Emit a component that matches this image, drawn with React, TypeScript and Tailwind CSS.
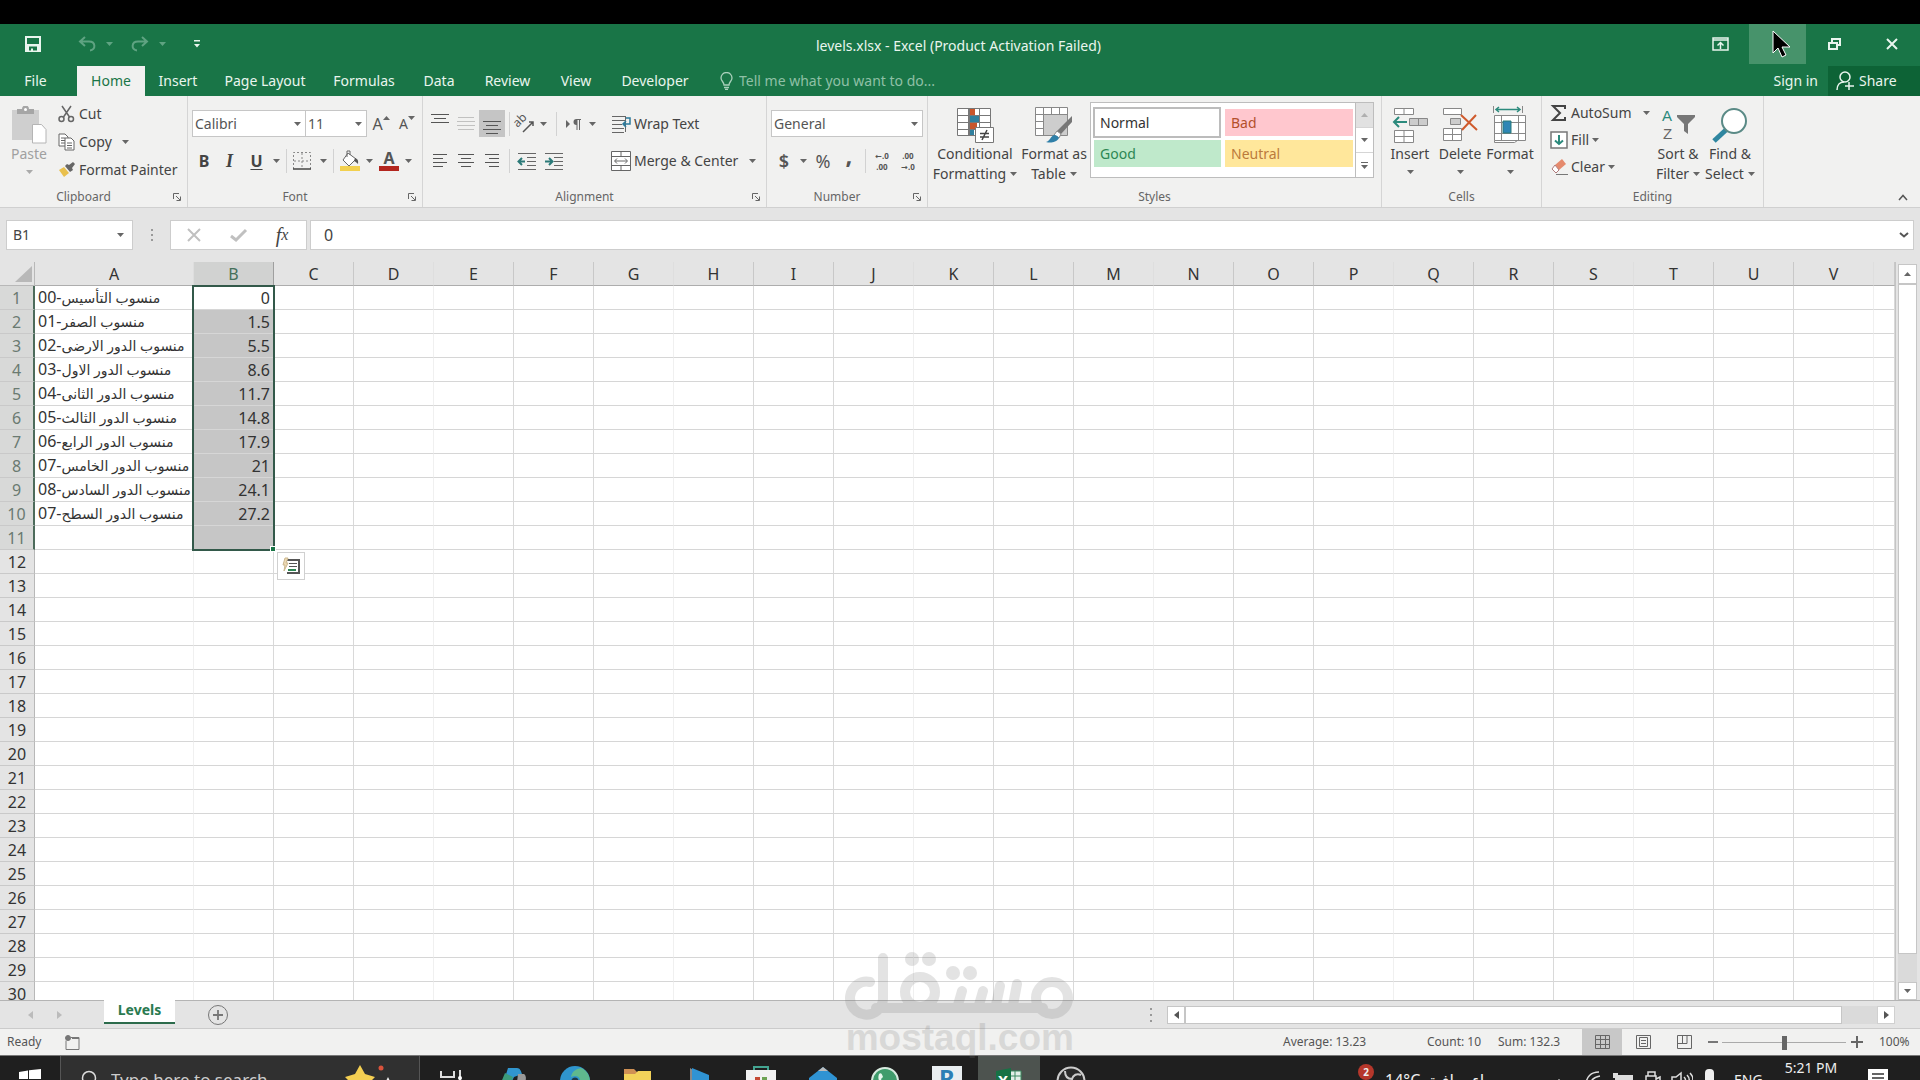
import type { ReactNode } from "react";

const ribbonTabs = [
  { name: "File", width: "w-[77px] pr-[6px]" },
  { name: "Home", width: "w-[68px]" },
  { name: "Insert", width: "w-[66px]" },
  { name: "Page Layout", width: "w-[108px]" },
  { name: "Formulas", width: "w-[90px]" },
  { name: "Data", width: "w-[60px]" },
  { name: "Review", width: "w-[77px]" },
  { name: "View", width: "w-[60px]" },
  { name: "Developer", width: "w-[98px]" },
];

const columns = "ABCDEFGHIJKLMNOPQRSTUVW".split("");

const levels = [
  ["منسوب التأسيس", "00", "0"],
  ["منسوب الصفر", "01", "1.5"],
  ["منسوب الدور الارضى", "02", "5.5"],
  ["منسوب الدور الاول", "03", "8.6"],
  ["منسوب الدور الثانى", "04", "11.7"],
  ["منسوب الدور الثالث", "05", "14.8"],
  ["منسوب الدور الرابع", "06", "17.9"],
  ["منسوب الدور الخامس", "07", "21"],
  ["منسوب الدور السادس", "08", "24.1"],
  ["منسوب الدور السطح", "07", "27.2"],
];

const rows = Array.from({ length: 30 }, (_, i) => i);

const Caret = ({ className = "" }: { className?: string }) => (
  <svg viewBox="0 0 7 4" className={`h-1 w-[7px] shrink-0 fill-[#666] ${className}`} aria-hidden="true">
    <path d="M0 0h7L3.5 4z" />
  </svg>
);

const Divider = () => <span className="h-6 w-px shrink-0 bg-[#d2d2d2]" />;

const ToolButton = ({
  label,
  className = "",
  children,
}: {
  label: string;
  className?: string;
  children: ReactNode;
}) => (
  <button
    type="button"
    aria-label={label}
    className={`flex h-[27px] shrink-0 items-center justify-center ${className}`}
  >
    {children}
  </button>
);

const RibbonGroup = ({
  title,
  className,
  launcher = false,
  children,
}: {
  title: string;
  className: string;
  launcher?: boolean;
  children: ReactNode;
}) => (
  <section className={`flex shrink-0 flex-col border-r border-[#d5d5d5] ${className}`} aria-label={title}>
    <div className="flex h-[91px] items-start">{children}</div>
    <div className="flex h-5 items-center">
      <span className="flex-1 text-center text-xs text-[#666]">{title}</span>
      {launcher && (
        <button type="button" aria-label={`${title} settings`} className="flex w-5 justify-center">
          <svg viewBox="0 0 8 8" className="size-2 fill-none stroke-[#666]">
            <path d="M.5 6V.5H6M3 3l4 4M7.5 3.5v4h-4" />
          </svg>
        </button>
      )}
    </div>
  </section>
);

const BigButton = ({
  icon,
  lines,
  className,
  caretBelow = false,
  muted = false,
}: {
  icon: ReactNode;
  lines: string[];
  className: string;
  caretBelow?: boolean;
  muted?: boolean;
}) => (
  <button
    type="button"
    className={`flex shrink-0 flex-col items-center pt-[10px] text-sm leading-5 ${muted ? "text-[#a0a0a0]" : "text-[#444]"} ${className}`}
  >
    <span className="flex h-[38px] items-center">{icon}</span>
    {lines.map((line, i) => (
      <span key={line} className="flex items-center gap-1 whitespace-nowrap">
        {line}
        {!caretBelow && i === lines.length - 1 && <Caret />}
      </span>
    ))}
    {caretBelow && <Caret className={muted ? "mt-[6px] opacity-50" : "mt-[6px]"} />}
  </button>
);

const Combo = ({ label, value, className }: { label: string; value: string; className: string }) => (
  <div className={`relative h-[27px] shrink-0 border border-[#c6c6c6] bg-white ${className}`}>
    <select
      aria-label={label}
      className="h-full w-full appearance-none bg-transparent pl-[2px] text-sm text-[#555] outline-none"
    >
      <option>{value}</option>
    </select>
    <Caret className="pointer-events-none absolute right-1 top-[11px]" />
  </div>
);

const Lines = ({ rows: widths, align = "items-start" }: { rows: string[]; align?: string }) => (
  <span className={`flex w-[18px] flex-col gap-[3px] ${align}`}>
    {widths.map((w, i) => (
      <span key={i} className={`h-px bg-[#555] ${w}`} />
    ))}
  </span>
);

const IndentIcon = ({ flip = false }: { flip?: boolean }) => (
  <svg viewBox="0 0 20 18" className="h-[18px] w-5 fill-none stroke-[#666]">
    <path d="M1 1.500h18M10 5.500h9M10 9.500h9M10 13.500h9M1 17.500h18" />
    {flip ? (
      <path className="stroke-[#2b7a78]" strokeWidth="2" d="M1 9.500h7M5 6l3.500 3.500L5 13" />
    ) : (
      <path className="stroke-[#2b7a78]" strokeWidth="2" d="M8 9.500H1.500M5 6 1.500 9.500 5 13" />
    )}
  </svg>
);

const TitleBar = () => (
  <header className="flex h-10 items-center bg-[#197547] text-[#e9f5ee]">
    <div className="flex w-[226px] items-center pl-6">
      <button type="button" aria-label="Save">
        <svg viewBox="0 0 18 18" className="size-[18px]">
          <path className="fill-[#e9f5ee]" fillRule="evenodd" d="M1 1h16v16H1zM3 3v6h12V3zM5 11.500v4h2v-2h2v2h4v-4z" />
        </svg>
      </button>
      <button type="button" aria-label="Undo" className="ml-9">
        <svg viewBox="0 0 18 16" className="h-4 w-[18px] fill-none stroke-[#5fa382] stroke-2">
          <path d="M7 1 2 5.500 7 10M2 5.500h9c7 0 7 8.500 1 9" />
        </svg>
      </button>
      <Caret className="ml-[10px] fill-[#5fa382]!" />
      <button type="button" aria-label="Redo" className="ml-[18px]">
        <svg viewBox="0 0 18 16" className="h-4 w-[18px] fill-none stroke-[#5fa382] stroke-2">
          <path d="m11 1 5 4.500-5 4.500M16 5.500H7c-7 0-7 8.500-1 9" />
        </svg>
      </button>
      <Caret className="ml-[10px] fill-[#5fa382]!" />
      <button type="button" aria-label="Customize Quick Access Toolbar" className="ml-7">
        <svg viewBox="0 0 6 8" className="h-2 w-[6px] fill-[#e9f5ee]">
          <path d="M0 0h6v1.500H0zM0 4h6L3 7.500z" />
        </svg>
      </button>
    </div>
    <h1 className="flex-1 pt-[3px] text-center text-sm">levels.xlsx - Excel (Product Activation Failed)</h1>
    <div className="flex h-full w-[229px] items-center">
      <button type="button" aria-label="Ribbon Display Options" className="flex h-full w-[58px] items-center justify-center">
        <svg viewBox="0 0 17 14" className="h-[14px] w-[17px] fill-none stroke-[#e9f5ee]">
          <path strokeWidth="1.500" d="M1 1h15v12H1z" />
          <path strokeWidth="1.500" d="M1 3h15M8.500 12V5.500M5.500 8.500l3-3 3 3" />
        </svg>
      </button>
      <button type="button" aria-label="Minimize" className="h-full w-[57px] bg-[#47936b]" />
      <button type="button" aria-label="Restore" className="flex h-full w-[57px] items-center justify-center">
        <svg viewBox="0 0 13 12" className="h-3 w-[13px] fill-none stroke-[#e9f5ee] stroke-2">
          <path d="M1 5h8v6H1zM4 4V1h8v6H9" />
        </svg>
      </button>
      <button type="button" aria-label="Close" className="flex h-full w-[57px] items-center justify-center">
        <svg viewBox="0 0 12 12" className="size-3 stroke-[#e9f5ee] stroke-2">
          <path d="m1 1 10 10M11 1 1 11" />
        </svg>
      </button>
    </div>
  </header>
);

const TabBar = () => (
  <nav className="flex h-8 items-end bg-[#197547] text-sm text-[#e9f5ee]">
    {ribbonTabs.map((tab) => (
      <button
        key={tab.name}
        type="button"
        className={`h-[30px] shrink-0 whitespace-nowrap ${tab.width} ${tab.name === "Home" ? "bg-[#f1f1f0] text-[#197547]" : ""}`}
      >
        {tab.name}
      </button>
    ))}
    <label className="ml-4 flex h-[30px] flex-1 items-center gap-[6px] text-[#8fc0a6]">
      <svg viewBox="0 0 13 18" className="h-[18px] w-[13px] fill-none stroke-[#a9d0bb]">
        <path strokeWidth="1.300" d="M4 13c0-3-3-4-3-7a5.500 5.500 0 0 1 11 0c0 3-3 4-3 7zM4 15.500h5M5 17.500h3" />
      </svg>
      <input
        aria-label="Tell me what you want to do"
        placeholder="Tell me what you want to do..."
        className="w-60 bg-transparent outline-none placeholder:text-[#8fc0a6]"
      />
    </label>
    <button type="button" className="h-[30px] px-[10px]">
      Sign in
    </button>
    <button type="button" className="flex h-[30px] w-[92px] items-center gap-1 bg-[#0d6336] pl-2">
      <svg viewBox="0 0 19 20" className="h-5 w-[19px] fill-none stroke-[#e9f5ee]">
        <circle cx="9" cy="6" r="5" strokeWidth="1.500" />
        <path strokeWidth="1.500" d="M1 19c0-5 3-8 7-8M13 11v8M9 15h9" />
      </svg>
      Share
    </button>
  </nav>
);

const Clipboard = () => (
  <RibbonGroup title="Clipboard" className="w-[188px]" launcher>
    <BigButton
      className="ml-1 w-[50px]"
      lines={["Paste"]}
      caretBelow
      muted
      icon={
        <svg viewBox="0 0 36 38" className="h-[38px] w-9">
          <path className="fill-[#cfcfcf]" d="M1 4h27v30H1z" />
          <path className="fill-[#a6a6a6]" d="M6 3h5a3.500 3.500 0 0 1 7 0h5v5H6z" />
          <circle cx="14.500" cy="3.500" r="1.500" className="fill-white" />
          <path className="fill-white stroke-[#b5b5b5]" d="M21.500 18.500h9l4.500 5v13.500H21.500z" />
        </svg>
      }
    />
    <div className="flex flex-col pl-1 pt-1 text-sm text-[#444]">
      <button type="button" className="flex h-7 items-center gap-1">
        <svg viewBox="0 0 17 18" className="h-[18px] w-[17px] fill-none stroke-[#666] stroke-[1.500]">
          <path d="m4 1 7.500 11M13 1 5.500 12" />
          <circle cx="3.500" cy="14" r="2.500" />
          <circle cx="13" cy="14" r="2.500" />
        </svg>
        Cut
      </button>
      <button type="button" className="flex h-7 items-center gap-1">
        <svg viewBox="0 0 17 18" className="h-[18px] w-[17px] fill-white stroke-[#666]">
          <path d="M1 1h6l3 3v9H1zM3 5h4M3 7.500h4M3 10h4" />
          <path d="M7 5h6l3 3v9H7zM9 10h5M9 12.500h5M9 15h5" />
        </svg>
        Copy <Caret className="ml-[6px]" />
      </button>
      <button type="button" className="flex h-7 items-center gap-1 whitespace-nowrap">
        <svg viewBox="0 0 17 16" className="h-4 w-[17px]">
          <path className="fill-[#666]" d="m11 3 4-3 2 2-3 4 1 2-3 2-5-6 2-2z" />
          <path className="fill-[#e9c04d]" d="m6 5 5 6-5 4-5-7z" />
        </svg>
        Format Painter
      </button>
    </div>
  </RibbonGroup>
);

const FontGroup = () => (
  <RibbonGroup title="Font" className="w-[235px]" launcher>
    <div className="flex flex-col gap-[10px] pl-1 pt-[14px]">
      <div className="flex">
        <Combo label="Font" value="Calibri" className="w-[114px]" />
        <Combo label="Font size" value="11" className="w-[61px] border-l-0" />
        <ToolButton label="Increase font size" className="w-7 text-base text-[#555]">
          A<Caret className="mb-3 rotate-180" />
        </ToolButton>
        <ToolButton label="Decrease font size" className="w-6 text-sm text-[#555]">
          A<Caret className="mb-3" />
        </ToolButton>
      </div>
      <div className="flex items-center">
        <ToolButton label="Bold" className="w-6 text-base font-bold text-[#444]">B</ToolButton>
        <ToolButton label="Italic" className="w-[27px] font-[Liberation_Serif] text-lg font-bold italic text-[#444]">I</ToolButton>
        <ToolButton label="Underline" className="w-[27px] text-base font-bold text-[#444] underline underline-offset-2">U</ToolButton>
        <ToolButton label="Underline style" className="w-3"><Caret /></ToolButton>
        <span className="w-1" />
        <Divider />
        <ToolButton label="Borders" className="w-[30px]">
          <svg viewBox="0 0 18 18" className="size-[18px] fill-none stroke-[#888]">
            <path strokeDasharray="2 2" d="M.5 17V.5h17V17M9 1v16M1 9h16" />
            <path strokeWidth="1.500" className="stroke-[#444]" d="M0 17h18" />
          </svg>
        </ToolButton>
        <ToolButton label="Border style" className="w-3"><Caret /></ToolButton>
        <span className="w-1" />
        <Divider />
        <ToolButton label="Fill color" className="w-8">
          <svg viewBox="0 0 22 22" className="size-[22px]">
            <path className="fill-white stroke-[#666]" d="m9 3 8 6-7 7-6-6zM8 7V1h3v4" />
            <path className="fill-[#555]" d="M16 8c3 1 3.500 3 3 6-1-1-2-2-4-3z" />
            <path className="fill-[#f2d04f]" d="M1 16h20v5H1z" />
          </svg>
        </ToolButton>
        <Caret />
        <ToolButton label="Font color" className="w-8">
          <span className="flex w-5 flex-col items-center border-b-[5px] border-[#b3261e] text-base font-bold leading-4 text-[#555]">A</span>
        </ToolButton>
        <Caret />
      </div>
    </div>
  </RibbonGroup>
);

const Alignment = () => (
  <RibbonGroup title="Alignment" className="w-[344px]" launcher>
    <div className="flex w-[186px] flex-col gap-[10px] pl-1 pt-[14px]">
      <div className="flex items-center">
        <ToolButton label="Top align" className="w-[26px] pb-[10px]"><Lines rows={["w-[18px]", "w-3", "w-[18px]"]} align="items-center" /></ToolButton>
        <ToolButton label="Middle align" className="w-[26px] opacity-30"><Lines rows={["w-4", "w-[18px]", "w-[18px]", "w-4"]} align="items-center" /></ToolButton>
        <ToolButton label="Bottom align" className="w-[26px] bg-[#c5c5c5] pt-2"><Lines rows={["w-[18px]", "w-3", "w-[18px]", "w-3"]} align="items-center" /></ToolButton>
        <span className="w-1" />
        <Divider />
        <ToolButton label="Orientation" className="w-[30px]">
          <svg viewBox="0 0 20 18" className="h-[18px] w-5 overflow-visible">
            <text x="0" y="9" transform="rotate(-45 6 8)" className="fill-[#555] text-[12px]">ab</text>
            <path className="fill-none stroke-[#555] stroke-[1.500]" d="M8 17 18 7M14 7h4v4" />
          </svg>
        </ToolButton>
        <Caret />
        <span className="w-[9px]" />
        <Divider />
        <ToolButton label="Text direction" className="w-8">
          <svg viewBox="0 0 16 12" className="h-3 w-4 fill-[#666]">
            <path d="M1 2v8l4-4zM11 1h5v1h-1v10h-1V2h-1.500v10h-1V7a3 3 0 0 1 0-6z" />
          </svg>
        </ToolButton>
        <Caret />
      </div>
      <div className="flex items-center">
        <ToolButton label="Align left" className="w-[26px] pl-1"><Lines rows={["w-[14px]", "w-[10px]", "w-[14px]", "w-[10px]"]} /></ToolButton>
        <ToolButton label="Center" className="w-[26px]"><Lines rows={["w-4", "w-[10px]", "w-4", "w-[10px]"]} align="items-center" /></ToolButton>
        <ToolButton label="Align right" className="w-[26px] pr-1"><Lines rows={["w-[14px]", "w-[10px]", "w-[14px]", "w-[10px]"]} align="items-end" /></ToolButton>
        <span className="w-1" />
        <Divider />
        <ToolButton label="Decrease indent" className="w-[34px]"><IndentIcon /></ToolButton>
        <ToolButton label="Increase indent" className="w-5"><IndentIcon flip /></ToolButton>
      </div>
    </div>
    <div className="ml-[2px] flex flex-col gap-[10px] pt-[14px] text-sm text-[#444]">
      <button type="button" className="flex h-[27px] items-center gap-[3px]">
        <svg viewBox="0 0 20 18" className="h-[18px] w-5 fill-none stroke-[#666]">
          <path d="M1 1.500h13M1 5.500h13M1 9.500h10M1 13.500h12M1 17.500h12M14.500 1v16" />
          <path className="stroke-[#2b7a9b] stroke-[1.500]" d="M15 3h4v6h-6M15 6l-3 3 3 3" />
        </svg>
        Wrap Text
      </button>
      <button type="button" className="flex h-[27px] items-center gap-[3px] whitespace-nowrap">
        <svg viewBox="0 0 20 20" className="size-5 fill-white stroke-[#666]">
          <path d="M.5.5h19v19H.5zM.5 5.500h19M.5 14.500h19M10 .5v5M10 14.500v5M4 10h12M6 7.500 3.500 10 6 12.500M14 7.500l2.500 2.500-2.500 2.500" />
        </svg>
        Merge &amp; Center <Caret className="ml-2" />
      </button>
    </div>
  </RibbonGroup>
);

const NumberGroup = () => (
  <RibbonGroup title="Number" className="w-[161px]" launcher>
    <div className="flex flex-col gap-[10px] pl-1 pt-[14px]">
      <Combo label="Number format" value="General" className="w-[152px]" />
      <div className="flex items-center text-[#555]">
        <ToolButton label="Accounting format" className="w-[26px] text-lg font-semibold">$</ToolButton>
        <ToolButton label="Accounting symbols" className="w-3"><Caret /></ToolButton>
        <ToolButton label="Percent style" className="w-7 text-lg">%</ToolButton>
        <ToolButton label="Comma style" className="w-6 pb-3 text-2xl font-bold">,</ToolButton>
        <span className="w-1" />
        <Divider />
        <ToolButton label="Increase decimal" className="w-8 flex-col text-[8px] font-bold leading-[11px]">
          <span className="whitespace-nowrap">←.0</span>
          <span>.00</span>
        </ToolButton>
        <ToolButton label="Decrease decimal" className="w-5 flex-col text-[8px] font-bold leading-[11px]">
          <span>.00</span>
          <span className="whitespace-nowrap">→.0</span>
        </ToolButton>
      </div>
    </div>
  </RibbonGroup>
);

const Styles = () => (
  <RibbonGroup title="Styles" className="w-[454px]">
    <BigButton
      className="w-[94px]"
      lines={["Conditional", "Formatting"]}
      icon={
        <svg viewBox="0 0 37 36" className="h-9 w-[37px]">
          <path className="fill-white stroke-[#777]" d="M.5 1.500h33v27H.5zM.5 8.500h33M.5 15.500h33M.5 22.500h33M11.500 1v27M22.500 1v27" />
          <path className="fill-[#777]" d="M11 1h6v27h-6z" />
          <path className="fill-[#c8552b]" d="M13 2h5v6h-5zM13 16h7v6h-7z" />
          <path className="fill-[#2f7f9e]" d="M13 9h9v6h-9zM13 23h4v5h-4z" />
          <path className="fill-white stroke-[#777]" d="M18.500 20.500h18v15h-18z" />
          <path className="fill-none stroke-[#444] stroke-[1.500]" d="M23 26.500h9M23 30h9M30 23l-5 10" />
        </svg>
      }
    />
    <BigButton
      className="w-16"
      lines={["Format as", "Table"]}
      icon={
        <svg viewBox="0 0 38 36" className="h-9 w-[38px]">
          <path className="fill-white" d="M.5.5h32v28H.5z" />
          <path className="fill-[#cdcdcd]" d="M8 8h24v20H8z" />
          <path className="fill-none stroke-[#888]" d="M.5.5h32v28H.5zM.5 7.500h32M.5 14.500h8M.5 21.500h8M8.500.5v28M16.500.5v7M24.500.5v7" />
          <path className="fill-[#777]" d="M37 9v6L26 27l-4-3z" />
          <path className="fill-white stroke-[#888]" d="m22 24 4 3-2 4-5-3z" />
          <path className="fill-[#2f7fa8]" d="M19 28c2 0 4 1 5 3-3 5-9 5-13 4 4-1 4-5 8-7z" />
        </svg>
      }
    />
    <div className="ml-1 mt-[6px] flex h-[76px] w-[284px] border border-[#bdbdbd] bg-white text-sm">
      <div className="grid flex-1 grid-cols-2 content-start gap-x-1 gap-y-[2px] p-[2px] pt-1">
        <button type="button" className="h-[31px] border-2 border-[#bcbcbc] pl-[5px] text-left text-[#333]">Normal</button>
        <button type="button" className="my-[2px] h-[27px] bg-[#ffc7ce] pl-[6px] text-left text-[#b3502b]">Bad</button>
        <button type="button" className="ml-px h-[27px] bg-[#bfe9cb] pl-[6px] text-left text-[#2d8754]">Good</button>
        <button type="button" className="h-[27px] bg-[#ffe79b] pl-[6px] text-left text-[#bb7a3c]">Neutral</button>
      </div>
      <div className="flex w-[18px] flex-col divide-y divide-[#d5d5d5] border-l border-[#bdbdbd]">
        <button type="button" aria-label="Previous styles" className="flex flex-1 items-center justify-center bg-[#e1e1e1]"><Caret className="rotate-180 opacity-40" /></button>
        <button type="button" aria-label="Next styles" className="flex flex-1 items-center justify-center"><Caret /></button>
        <button type="button" aria-label="More styles" className="flex flex-1 flex-col items-center justify-center gap-[2px]">
          <span className="h-px w-[7px] bg-[#666]" />
          <Caret />
        </button>
      </div>
    </div>
  </RibbonGroup>
);

const Cells = () => (
  <RibbonGroup title="Cells" className="w-40">
    <BigButton
      className="ml-1 w-12"
      lines={["Insert"]}
      caretBelow
      icon={
        <svg viewBox="0 0 36 36" className="size-9 fill-white stroke-[#888]">
          <path d="M2.500 1.500h19v6h-19zM12 1.500v6M2.500 23.500h19v12h-19zM12 23.500v12M2.500 29.500h19" />
          <path className="fill-[#ccc]" d="M17.500 11.500h18v7h-18zM26.500 11.500v7" />
          <path className="fill-none stroke-[#2b8a7c] stroke-2" d="M15 15H2M7 10l-5 5 5 5" />
        </svg>
      }
    />
    <BigButton
      className="w-[52px]"
      lines={["Delete"]}
      caretBelow
      icon={
        <svg viewBox="0 0 36 36" className="size-9 fill-white stroke-[#888]">
          <path d="M1.500 1.500h18v6h-18zM1.500 21.500h18v12h-18zM10.500 21.500v12M1.500 27.500h18" />
          <path className="fill-[#ccc]" d="M8.500 11.500h10v6h-10z" />
          <path className="fill-none stroke-[#cf5a2c] stroke-2" d="m19 8 16 15M34 8 20 23" />
        </svg>
      }
    />
    <BigButton
      className="w-12"
      lines={["Format"]}
      caretBelow
      icon={
        <svg viewBox="0 0 36 38" className="h-[38px] w-9 fill-white stroke-[#888]">
          <path d="M2.500 9.500h31v25h-31zM9.500 9.500v25M26.500 9.500v25M2.500 16.500h31M2.500 27.500h31M2.500 34.500v2h20l3-2" />
          <path className="fill-[#2f86b5] stroke-[#2b7a78]" d="M11 15h8v12h-8z" />
          <path className="fill-none stroke-[#2b8a7c] stroke-[1.500]" d="M4 3.500h24M7 1 4 3.500 7 6M25 1l3 2.500L25 6" />
          <path d="M1.500 0v7M30.500 0v7" />
        </svg>
      }
    />
  </RibbonGroup>
);

const Editing = () => (
  <RibbonGroup title="Editing" className="w-[222px]">
    <div className="ml-2 flex w-[102px] flex-col pt-[3px] text-sm text-[#444]">
      <button type="button" className="flex h-[27px] items-center gap-[3px]">
        <svg viewBox="0 0 18 18" className="size-[18px] fill-none stroke-[#444] stroke-2">
          <path d="M15 5V2H3l7 7-7 7h12v-3" />
        </svg>
        AutoSum <Caret className="ml-2" />
      </button>
      <button type="button" className="flex h-[27px] items-center gap-[3px]">
        <svg viewBox="0 0 18 18" className="size-[18px] fill-white stroke-[#777]">
          <path strokeWidth="1.500" d="M1 1h16v16H1z" />
          <path className="fill-none stroke-[#2b8a7c] stroke-2" d="M9 4v9M5 9.500 9 13l4-3.500" />
        </svg>
        Fill <Caret />
      </button>
      <button type="button" className="flex h-[27px] items-center gap-[3px]">
        <svg viewBox="0 0 18 18" className="size-[18px]">
          <path className="fill-[#e58a6d]" d="m5 7 7-6 4 5-7 6z" />
          <path className="fill-white stroke-[#b07a7a]" d="m5 7 4 5-3 3-4-4z" />
          <path className="stroke-[#777]" d="M6 16.500h12" />
        </svg>
        Clear <Caret />
      </button>
    </div>
    <BigButton
      className="w-[52px]"
      lines={["Sort &", "Filter"]}
      icon={
        <svg viewBox="0 0 35 36" className="h-9 w-[35px] overflow-visible font-[Liberation_Sans]">
          <text x="1" y="14" className="fill-[#2b8a7c] text-[15px]">A</text>
          <text x="2" y="32" className="fill-[#666] text-[15px]">Z</text>
          <path className="fill-[#777]" d="M16 8h18v2l-7 7v10l-4-3v-7l-7-7z" />
        </svg>
      }
    />
    <BigButton
      className="w-[52px]"
      lines={["Find &", "Select"]}
      icon={
        <svg viewBox="0 0 36 36" className="size-9">
          <path className="stroke-[#2f86a0] stroke-[5]" d="M2 34 15 22" />
          <circle cx="22" cy="14" r="12" className="fill-white stroke-[#5a8a86] stroke-2" />
        </svg>
      }
    />
  </RibbonGroup>
);

const FormulaBar = () => (
  <div className="flex h-[55px] items-start border-t border-[#d0d0d0] bg-[#e4e4e4] px-[6px] pt-3 text-[#444]">
    <div className="flex h-[30px] w-[127px] shrink-0 items-center border border-[#cdcdcd] bg-white pr-2">
      <input aria-label="Name Box" defaultValue="B1" className="min-w-0 flex-1 bg-transparent pl-[6px] text-sm outline-none" />
      <Caret />
    </div>
    <div className="flex h-[30px] w-[37px] shrink-0 flex-col items-center justify-center gap-[3px]">
      <span className="size-[2px] bg-[#999]" />
      <span className="size-[2px] bg-[#999]" />
      <span className="size-[2px] bg-[#999]" />
    </div>
    <div className="flex h-[30px] w-[137px] shrink-0 items-center border border-[#cdcdcd] bg-white">
      <ToolButton label="Cancel" className="w-[45px]">
        <svg viewBox="0 0 14 14" className="size-[14px] stroke-[#c0c0c0] stroke-2"><path d="m1 1 12 12M13 1 1 13" /></svg>
      </ToolButton>
      <ToolButton label="Enter" className="w-[45px]">
        <svg viewBox="0 0 18 14" className="h-[14px] w-[18px] fill-none stroke-[#c0c0c0] stroke-[3]"><path d="m1 8 5 4L16 2" /></svg>
      </ToolButton>
      <ToolButton label="Insert Function" className="w-[42px] font-[Liberation_Serif] text-xl italic">
        f<span className="text-base">x</span>
      </ToolButton>
    </div>
    <div className="ml-[3px] flex h-[30px] flex-1 items-center border border-[#cdcdcd] bg-white pr-1">
      <input aria-label="Formula" defaultValue="0" className="min-w-0 flex-1 bg-transparent pl-[13px] text-base outline-none" />
      <button type="button" aria-label="Expand formula bar">
        <svg viewBox="0 0 10 6" className="h-[6px] w-[10px] fill-none stroke-[#555] stroke-2"><path d="m1 1 4 3.500L9 1" /></svg>
      </button>
    </div>
  </div>
);

const Sheet = () => (
  <div className="flex min-h-0 flex-1 bg-[#e4e4e4]">
    <div className="relative min-w-0 flex-1 overflow-hidden border-r border-[#c4c4c4]">
      <table className="w-full table-fixed border-separate border-spacing-0 text-base leading-5 text-[#333]">
        <thead>
          <tr className="h-6">
            <th className="w-[35px] border-b border-r border-[#b8b8b8] p-0">
              <svg viewBox="0 0 17 16" className="ml-auto mr-[2px] h-4 w-[17px] fill-[#b8b8b8]"><path d="M17 0v16H0z" /></svg>
            </th>
            {columns.map((name, i) => (
              <th
                key={name}
                scope="col"
                className={`h-6 border-b border-r p-0 text-center font-normal ${
                  name === "A" ? "w-[159px]" : name === "W" ? "" : "w-20"
                } ${name === "B" ? "border-[#9f9f9f] bg-[#d1d2d1] text-[#45705a]" : i % 3 === 0 ? "border-r-[#dedede] border-b-[#adadad]" : "border-r-[#c8c8c8] border-b-[#adadad]"}`}
              >
                {name === "W" ? "" : name}
              </th>
            ))}
          </tr>
        </thead>
        <tbody>
          {rows.map((r) => (
            <tr key={r} className="h-6">
              <th
                scope="row"
                className={`h-6 border-b border-r border-b-[#c9c9c9] p-0 text-center font-normal ${
                  r < 11 ? "border-r-2 border-r-[#4d6b5b] bg-[#d8d9d8] text-[#6a7a71]" : "border-r-[#b8b8b8]"
                }`}
              >
                {r + 1}
              </th>
              {columns.map((name, i) => {
                const item = levels[r];
                const selected = name === "B" && r > 0 && r < 11;
                return (
                  <td
                    key={name}
                    className={`h-6 overflow-hidden whitespace-nowrap border-b border-r border-b-[#d6d6d6] p-0 ${
                      i % 3 === 0 ? "border-r-[#f0f0f0]" : "border-r-[#d9d9d9]"
                    } ${selected ? "bg-[#c6c6c6]" : "bg-white"} ${name === "B" ? "pr-[3px] text-right" : "pl-[3px]"}`}
                  >
                    {name === "A" && item && (
                      <>
                        <span>{item[1]}-</span>
                        <span dir="rtl" className="inline-block text-sm leading-5">{item[0]}</span>
                      </>
                    )}
                    {name === "B" && item && item[2]}
                  </td>
                );
              })}
            </tr>
          ))}
        </tbody>
      </table>
      <div className="pointer-events-none absolute left-[192px] top-[23px] h-[266px] w-[83px] border-2 border-[#33594a]">
        <span className="absolute -bottom-[3px] -right-[3px] size-[6px] border border-white bg-[#197547]" />
      </div>
      <button
        type="button"
        aria-label="Quick Analysis"
        className="absolute left-[277px] top-[290px] flex size-7 items-center justify-center border border-[#d0d0d0] bg-white"
      >
        <svg viewBox="0 0 18 18" className="size-[18px] fill-none stroke-[#555]">
          <path strokeWidth="2" d="M5 3h12v13H5" />
          <path d="M7 6.500h8M7 9.500h8" />
          <path className="stroke-[#2d8754] stroke-2" d="M6 13h8" />
          <path className="fill-[#ecd9b4] stroke-[#cbb78e]" d="M3 1 1 8h2l-1 6 4-8H4l2-5z" />
        </svg>
      </button>
    </div>
    <div className="flex w-6 shrink-0 flex-col items-center pr-px pt-[2px]">
      <button type="button" aria-label="Scroll up" className="flex h-5 w-[19px] shrink-0 items-center justify-center border border-[#c6c6c6] bg-white">
        <Caret className="rotate-180" />
      </button>
      <div className="flex w-[19px] flex-1 flex-col bg-[#dadada]">
        <div className="h-[96%] border border-[#c6c6c6] bg-white" />
      </div>
      <button type="button" aria-label="Scroll down" className="flex h-[18px] w-[19px] shrink-0 items-center justify-center border border-[#c6c6c6] bg-white">
        <Caret />
      </button>
    </div>
  </div>
);

const SheetTabs = () => (
  <div className="flex h-[29px] shrink-0 border-b border-t border-[#b4b4b4] border-b-[#cbcbcb] bg-[#e4e4e4]">
    <div className="flex w-[104px] items-center gap-6 pl-7">
      <button type="button" aria-label="Previous sheet">
        <svg viewBox="0 0 5 8" className="h-2 w-[5px] fill-[#bbb]"><path d="M5 0v8L0 4z" /></svg>
      </button>
      <button type="button" aria-label="Next sheet">
        <svg viewBox="0 0 5 8" className="h-2 w-[5px] fill-[#bbb]"><path d="M0 0v8l5-4z" /></svg>
      </button>
    </div>
    <button type="button" className="-mt-px h-6 w-[71px] border-b-2 border-[#2c6b4b] bg-white pb-[2px] text-sm font-bold text-[#2a7a50]">
      Levels
    </button>
    <button type="button" aria-label="New sheet" className="ml-8 self-center">
      <svg viewBox="0 0 22 22" className="size-[22px] fill-none stroke-[#777]">
        <circle cx="11" cy="11" r="9.500" />
        <path strokeWidth="1.800" d="M11 6v10M6 11h10" />
      </svg>
    </button>
    <div className="ml-auto flex w-[770px] items-center pr-[25px]">
      <div className="flex w-[17px] flex-col gap-1">
        <span className="size-[2px] bg-[#999]" />
        <span className="size-[2px] bg-[#999]" />
        <span className="size-[2px] bg-[#999]" />
      </div>
      <button type="button" aria-label="Scroll left" className="flex h-[18px] w-[18px] items-center justify-center border border-[#c6c6c6] bg-white">
        <svg viewBox="0 0 5 8" className="h-2 w-[5px] fill-[#555]"><path d="M5 0v8L0 4z" /></svg>
      </button>
      <div className="flex h-[18px] flex-1 bg-[#dadada]">
        <div className="w-[95%] border border-[#c6c6c6] bg-white" />
      </div>
      <button type="button" aria-label="Scroll right" className="flex h-[18px] w-[18px] items-center justify-center border border-[#d0d0d0] bg-white">
        <svg viewBox="0 0 5 8" className="h-2 w-[5px] fill-[#555]"><path d="M0 0v8l5-4z" /></svg>
      </button>
    </div>
  </div>
);

const StatusBar = () => (
  <footer className="flex h-[26px] shrink-0 items-center bg-[#f1f1f0] pl-[7px] text-xs text-[#555]">
    <span className="w-[58px]">Ready</span>
    <button type="button" aria-label="Record macro">
      <svg viewBox="0 0 15 15" className="size-[15px] fill-none stroke-[#777]">
        <path d="M1 5.500v9h13v-12H6" />
        <path strokeWidth="2" d="M7 3h7" />
        <circle cx="3" cy="3" r="2.500" className="fill-[#777]" />
      </svg>
    </button>
    <span className="ml-auto w-[144px]">Average: 13.23</span>
    <span className="w-[71px]">Count: 10</span>
    <span className="w-[84px]">Sum: 132.3</span>
    <button type="button" aria-label="Normal view" className="flex h-full w-10 items-center justify-center bg-[#c8c8c8]">
      <svg viewBox="0 0 15 14" className="h-[14px] w-[15px] fill-none stroke-[#666]"><path d="M.5.5h14v13H.5zM.5 4.500h14M.5 9.500h14M5.500.5v13M10.500.5v13" /></svg>
    </button>
    <button type="button" aria-label="Page layout view" className="flex h-full w-[42px] items-center justify-center">
      <svg viewBox="0 0 15 14" className="h-[14px] w-[15px] fill-none stroke-[#666]"><path d="M.5.5h14v13H.5zM3.500 2.500h8v9h-8zM5 5.500h5M5 8.500h5" /></svg>
    </button>
    <button type="button" aria-label="Page break preview" className="flex h-full w-10 items-center justify-center">
      <svg viewBox="0 0 15 14" className="h-[14px] w-[15px] fill-none stroke-[#666]"><path d="M.5.5h14v13H.5zM5.500.5v8M.5 8.500h9.500V.5" /></svg>
    </button>
    <button type="button" aria-label="Zoom out" className="flex w-[18px] justify-center"><span className="h-[2px] w-[10px] bg-[#777]" /></button>
    <input
      type="range"
      aria-label="Zoom"
      defaultValue={50}
      className="h-4 w-[124px] appearance-none bg-transparent [&::-webkit-slider-runnable-track]:h-px [&::-webkit-slider-runnable-track]:bg-[#aaa] [&::-webkit-slider-thumb]:-mt-[6px] [&::-webkit-slider-thumb]:h-[14px] [&::-webkit-slider-thumb]:w-[5px] [&::-webkit-slider-thumb]:appearance-none [&::-webkit-slider-thumb]:bg-[#666]"
    />
    <button type="button" aria-label="Zoom in" className="flex w-[22px] justify-center">
      <svg viewBox="0 0 12 12" className="size-3 stroke-[#666] stroke-2"><path d="M6 0v12M0 6h12" /></svg>
    </button>
    <span className="w-[52px] pl-[11px]">100%</span>
  </footer>
);

const AppIcon = ({ label, active = false, children }: { label: string; active?: boolean; children: ReactNode }) => (
  <button
    type="button"
    aria-label={label}
    className={`flex h-12 w-[62px] shrink-0 items-center justify-center ${active ? "bg-[#4d534f]" : ""}`}
  >
    <svg viewBox="0 0 30 30" className="size-[30px]">{children}</svg>
  </button>
);

const Taskbar = () => (
  <div className="h-[25px] shrink-0 overflow-hidden border-t border-[#777] bg-[#1f1f1f]">
    <div className="flex h-12 items-center text-[#eee]">
      <button type="button" aria-label="Start" className="flex h-12 w-[60px] items-center justify-center">
        <svg viewBox="0 0 22 22" className="size-[22px] fill-white"><path d="m0 3 9-1.500V10H0zM10 1.300 22 0v10H10zM0 11h9v9l-9-1.500zM10 11h12v11l-12-1.500z" /></svg>
      </button>
      <label className="flex h-12 w-[360px] items-center gap-[14px] border-x border-[#555] bg-[#303030] pl-5 pr-[26px]">
        <svg viewBox="0 0 16 20" className="h-5 w-4 fill-none stroke-[#ddd] stroke-[1.500]"><circle cx="8" cy="8" r="6.500" /><path d="m4 13-3 6" /></svg>
        <input aria-label="Search" placeholder="Type here to search" className="min-w-0 flex-1 bg-transparent text-[17px] outline-none placeholder:text-[#ccc]" />
        <svg viewBox="0 0 48 30" className="h-[30px] w-12">
          <path className="fill-[#f4cf52]" d="m15 0 5 9 10 3-7 7 1 10-9-4-9 4 1-10-7-7 10-3z" />
          <circle cx="36" cy="3" r="2.500" className="fill-[#d9533c]" />
          <path className="fill-[#eee]" d="m43 12 2 4 3 2-3 2-2 4-2-4-3-2 3-2z" />
        </svg>
      </label>
      <AppIcon label="Task View">
        <path className="fill-none stroke-[#ddd] stroke-2" d="M5 6v6h13V6M5 24v-6h13v6M24 5v20" />
        <circle cx="24" cy="13" r="2" className="fill-white" />
      </AppIcon>
      <AppIcon label="Copilot">
        <path className="fill-[#3196cf]" d="M10 3h9c3 0 4 3 5 6l-8 3-7 14-5-4z" />
        <path className="fill-[#3c9b7a]" d="M7 8 2 20c0 5 4 6 8 6l5-14z" />
        <path className="fill-[#999]" d="M20 9h6c3 2 2 7 0 12l-8 5z" />
      </AppIcon>
      <AppIcon label="Edge">
        <circle cx="15" cy="16" r="15" className="fill-[#2f95cd]" />
        <path className="fill-[#5fb98e]" d="M21 3c7 3 9 9 9 14-2 4-8 4-10 1 1-7-4-8-9-6 1-6 5-8 10-9z" />
        <circle cx="15" cy="16" r="3.500" className="fill-[#1f3b47]" />
      </AppIcon>
      <AppIcon label="File Explorer">
        <path className="fill-[#cf9054]" d="M2 4h10l3 3v6H2z" />
        <path className="fill-[#f3d25a]" d="M2 9h11l3-3h13v20H2z" />
      </AppIcon>
      <AppIcon label="Media">
        <path className="fill-[#888]" d="M6 3v24l6-3V7z" />
        <path className="fill-[#2f93d3]" d="m8 3 17 7v16L8 28z" />
      </AppIcon>
      <AppIcon label="Microsoft Store">
        <path className="fill-none stroke-[#43a491] stroke-2" d="M8 6V2h14v4" />
        <path className="fill-[#f2f2f2]" d="M0 5h30v22H0z" />
        <path className="fill-[#c54a34]" d="M9 12h5v5H9z" />
        <path className="fill-[#6da354]" d="M16 12h5v5h-5z" />
      </AppIcon>
      <AppIcon label="Mail">
        <path className="fill-[#2f93d3]" d="M15 2 29 13v15H1V13z" />
        <path className="fill-[#bbb]" d="m15 2 5 4H10z" />
      </AppIcon>
      <AppIcon label="WhatsApp">
        <circle cx="15" cy="16" r="13" className="fill-[#3f9c6c] stroke-[#d7eadf] stroke-2" />
        <path className="fill-[#e6f5ec]" d="M9 9c2-2 3 0 4 3l-2 2c1 3 3 4 5 5l2-2 4 2c-1 4-5 4-8 2-4-2-7-7-5-12z" />
      </AppIcon>
      <AppIcon label="Revit">
        <path className="fill-[#e9eef0]" d="M0 1h30v29H0z" />
        <text x="7" y="22" className="fill-[#2b7fb5] text-[24px] font-bold">R</text>
      </AppIcon>
      <AppIcon label="Excel" active>
        <path className="fill-[#e4efe8] stroke-[#3e8b62]" d="M15 6h12v20H15zM21 6v20M15 11h12M15 16h12" />
        <path className="fill-[#177245]" d="m2 6 15-3v26L2 26z" />
        <text x="4" y="21" className="fill-white text-[15px] font-bold">X</text>
      </AppIcon>
      <AppIcon label="OBS Studio">
        <circle cx="15" cy="16" r="13.500" className="fill-[#2a2a2a] stroke-[#ccc] stroke-2" />
        <path className="fill-none stroke-[#ccc] stroke-2" d="M9 6c0 6 3 8 7 8M25 10c-4-2-8 0-9 4s2 8 5 9M5 20c5 3 9 1 11-6" />
      </AppIcon>
      <div className="ml-auto flex h-12 w-[562px] items-center text-[15px]">
        <span className="mb-4 flex size-4 items-center justify-center rounded-full bg-[#b5372b] text-[10px] font-bold">2</span>
        <span className="ml-[11px] w-[168px] whitespace-nowrap text-base">
          14°C <span dir="rtl" className="ml-1 inline-block">سماء صافية</span>
        </span>
        <svg viewBox="0 0 12 8" className="mt-1 h-2 w-3 fill-none stroke-[#ddd] stroke-[1.500]"><path d="m1 7 5-5 5 5" /></svg>
        <svg viewBox="0 0 16 18" className="ml-5 h-[18px] w-4 fill-none stroke-[#ddd] stroke-[1.500]"><path d="M1 14C1 6 6 1 14 1M5 16c0-6 3-10 10-11M10 17c0-4 2-6 5-7" /></svg>
        <svg viewBox="0 0 20 18" className="ml-3 h-[18px] w-5 fill-[#ddd]"><path d="M2 4h18v10H2zM0 2h5v5H0z" /></svg>
        <svg viewBox="0 0 16 20" className="ml-3 h-5 w-4 fill-none stroke-[#ddd] stroke-[1.500]"><path d="M1 6h10v12H1zM3 6V2h7v4M11 9l4-2v8l-4-2" /></svg>
        <svg viewBox="0 0 22 18" className="ml-[10px] h-[18px] w-[22px] fill-none stroke-[#ddd] stroke-[1.500]"><path d="M1 6h4l5-4v14l-5-4H1zM13 6c2 2 2 4 0 6M16 4c3 3 3 7 0 10M19 2c4 4 4 10 0 14" /></svg>
        <span className="ml-3 h-[22px] w-[9px] rounded-sm bg-[#eee]" />
        <span className="ml-5 text-sm">ENG</span>
        <time className="mb-6 ml-[22px] whitespace-nowrap text-sm">5:21 PM</time>
        <svg viewBox="0 0 22 22" className="ml-auto mr-[30px] size-[22px]"><path className="fill-white" d="M0 0h20v16h-5v5l-5-5H0z" /><path className="stroke-[#333] stroke-[1.500]" d="M4 5h12M4 9h12" /></svg>
      </div>
    </div>
  </div>
);

const Watermark = () => (
  <div className="pointer-events-none absolute bottom-6 left-[44%] flex w-[230px] flex-col items-center opacity-20">
    <svg viewBox="0 0 232 70" className="h-[70px] w-[232px] fill-none stroke-[#777]" strokeLinecap="round" strokeWidth="10" role="img" aria-label="مستقل">
      <path d="M26 32A16.500 16.500 0 1 0 39 49V8" />
      <path d="M32 58h167" />
      <circle cx="76" cy="42" r="15" />
      <circle cx="208" cy="48" r="16" />
      <path d="m118 41-4 14M139 41l-4 14M156 36l-4 19M173 34l-4 21" />
      <g className="fill-[#777] stroke-none">
        <circle cx="68" cy="9" r="7" />
        <circle cx="85" cy="9" r="7" />
        <circle cx="109" cy="23" r="7" />
        <circle cx="126" cy="23" r="7" />
      </g>
    </svg>
    <span className="font-[Liberation_Sans] text-[37px] font-bold leading-9 text-[#777]">mostaql.com</span>
  </div>
);

const App = () => {
  return (
    <main className="relative flex h-screen flex-col overflow-hidden bg-black pt-[24px] font-['Noto_Sans','DejaVu_Sans',sans-serif]">
      <TitleBar />
      <TabBar />
      <div className="flex h-[111px] shrink-0 bg-[#f1f1f0]">
        <Clipboard />
        <FontGroup />
        <Alignment />
        <NumberGroup />
        <Styles />
        <Cells />
        <Editing />
        <button type="button" aria-label="Collapse the ribbon" className="mb-[6px] ml-auto mr-3 self-end">
          <svg viewBox="0 0 10 7" className="h-[7px] w-[10px] fill-none stroke-[#555] stroke-[1.500]"><path d="m1 6 4-4.500L9 6" /></svg>
        </button>
      </div>
      <FormulaBar />
      <Sheet />
      <SheetTabs />
      <StatusBar />
      <Taskbar />
      <Watermark />
      <svg viewBox="0 0 20 30" className="pointer-events-none absolute right-32 top-[30px] h-[30px] w-5">
        <path className="fill-black stroke-white" d="M1 1v22l5-5 4 9 4-2-4-8h8z" />
      </svg>
    </main>
  );
};

export default App;
